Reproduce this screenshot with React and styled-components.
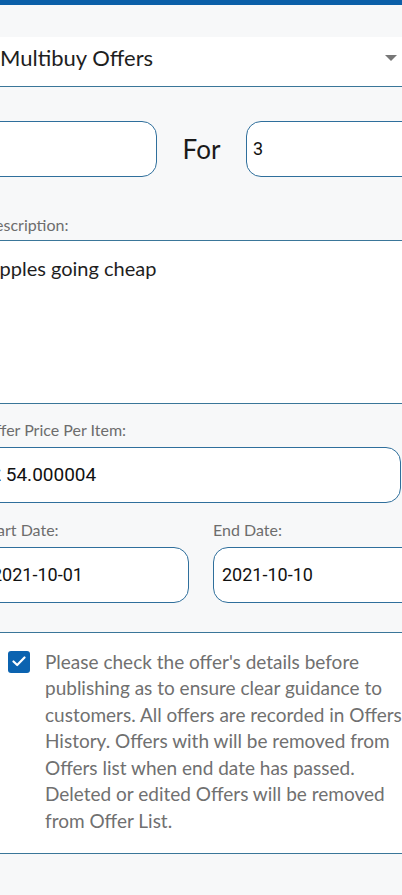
import styled, { createGlobalStyle } from "styled-components";

const Global = createGlobalStyle`
    html, body {
        margin: 0;
        padding: 0;
        background: #f7f8f9;
        overflow: hidden;
    }
    * {
        box-sizing: border-box;
    }
`;

const Page = styled.div`
    width: 402px;
    height: 895px;
    overflow: hidden;
    background: #f7f8f9;
    font-family: Lato, "Open Sans", sans-serif;
`;

const TopBar = styled.div`
    height: 5px;
    background: #0b5fa8;
`;

const Select = styled.div`
    margin-top: 32px;
    height: 49.5px;
    background: #fff;
    border-bottom: 1.5px solid #3a7699;
    display: flex;
    align-items: center;
    justify-content: space-between;
    padding: 0 5px 8px 0;
    font-size: 22px;
    color: #1e1e1e;
`;

const Caret = styled.span`
    width: 0;
    height: 0;
    border-style: solid;
    border-width: 6px 6px 0 6px;
    border-color: #777 transparent transparent transparent;
    margin-top: 2px;
`;

// the form was scrolled a little sideways, so the left edge is cut off
const Shifted = styled.div`
    margin-left: -17px;
    width: 437px;
`;

const QtyRow = styled.div`
    margin-top: 34px;
    display: flex;
    align-items: center;
`;

const Field = styled.div`
    width: ${(p) => p.$w}px;
    height: 56px;
    flex-shrink: 0;
    background: #fff;
    border: 1.5px solid #2f6f9c;
    border-radius: 15px;
    display: flex;
    align-items: center;
    padding-left: ${(p) => p.$pad || 8}px;
    font-family: Roboto, "Open Sans", sans-serif;
    font-size: ${(p) => p.$size || 18}px;
    color: ${(p) => p.$faint ? "#b5b5b5" : "#111"};
`;

const ForText = styled.span`
    width: 89px;
    text-align: center;
    font-size: 26px;
    color: #1a1a1a;
`;

const Label = styled.div`
    margin-top: ${(p) => p.$top}px;
    margin-bottom: ${(p) => p.$bottom}px;
    height: 20px;
    line-height: 20px;
    font-size: 16px;
    color: #6d6d6d;
`;

const TextBox = styled.div`
    height: 164px;
    background: #fff;
    border-top: 1.5px solid #3a7699;
    border-bottom: 1.5px solid #3a7699;
    padding: 15px 0 0 3px;
    font-size: 20px;
    line-height: 24px;
    color: #1e1e1e;
`;

const DateRow = styled.div`
    display: flex;
    gap: 24px;
`;

const DateCol = styled.div`
    display: flex;
    flex-direction: column;
`;

const Notice = styled.div`
    margin-top: 29px;
    height: 222px;
    background: #fff;
    border-top: 1.5px solid #3a7699;
    border-bottom: 1.5px solid #3a7699;
    display: flex;
    gap: 15px;
    padding: 16px 0 0 25px;
`;

const Check = styled.span`
    width: 22px;
    height: 22px;
    flex-shrink: 0;
    margin-top: 2px;
    border-radius: 3px;
    background: #0b63b0;
    display: flex;
    align-items: center;
    justify-content: center;
`;

const NoticeText = styled.p`
    margin: 0;
    font-size: 19px;
    line-height: 26.5px;
    color: #707070;
    white-space: nowrap;
`;

export default function App() {
    return (
        <Page>
            <Global />
            <TopBar />
            <Select>
                Multibuy Offers
                <Caret />
            </Select>
            <Shifted>
                <QtyRow>
                    <Field $w={174} $pad={6} $faint>3</Field>
                    <ForText>For</ForText>
                    <Field $w={174} $pad={6}>3</Field>
                </QtyRow>
                <Label $top={38} $bottom={5}>Description:</Label>
                <TextBox>Apples going cheap</TextBox>
                <Label $top={16} $bottom={7}>Offer Price Per Item:</Label>
                <Field $w={418} $pad={6} $size={19}>£ 54.000004</Field>
                <DateRow>
                    <DateCol>
                        <Label $top={17} $bottom={7}>Start Date:</Label>
                        <Field $w={206}>2021-10-01</Field>
                    </DateCol>
                    <DateCol>
                        <Label $top={17} $bottom={7}>End Date:</Label>
                        <Field $w={206}>2021-10-10</Field>
                    </DateCol>
                </DateRow>
                <Notice>
                    <Check>
                        <svg width="14" height="11" viewBox="0 0 14 11">
                            <path d="M1.5 5.5 L5.2 9 L12.5 1.5" fill="none" stroke="#fff" strokeWidth="2.2" strokeLinecap="round" strokeLinejoin="round" />
                        </svg>
                    </Check>
                    <NoticeText>
                        Please check the offer's details before<br />
                        publishing as to ensure clear guidance to<br />
                        customers. All offers are recorded in Offers<br />
                        History. Offers with will be removed from<br />
                        Offers list when end date has passed.<br />
                        Deleted or edited Offers will be removed<br />
                        from Offer List.
                    </NoticeText>
                </Notice>
            </Shifted>
        </Page>
    );
}
